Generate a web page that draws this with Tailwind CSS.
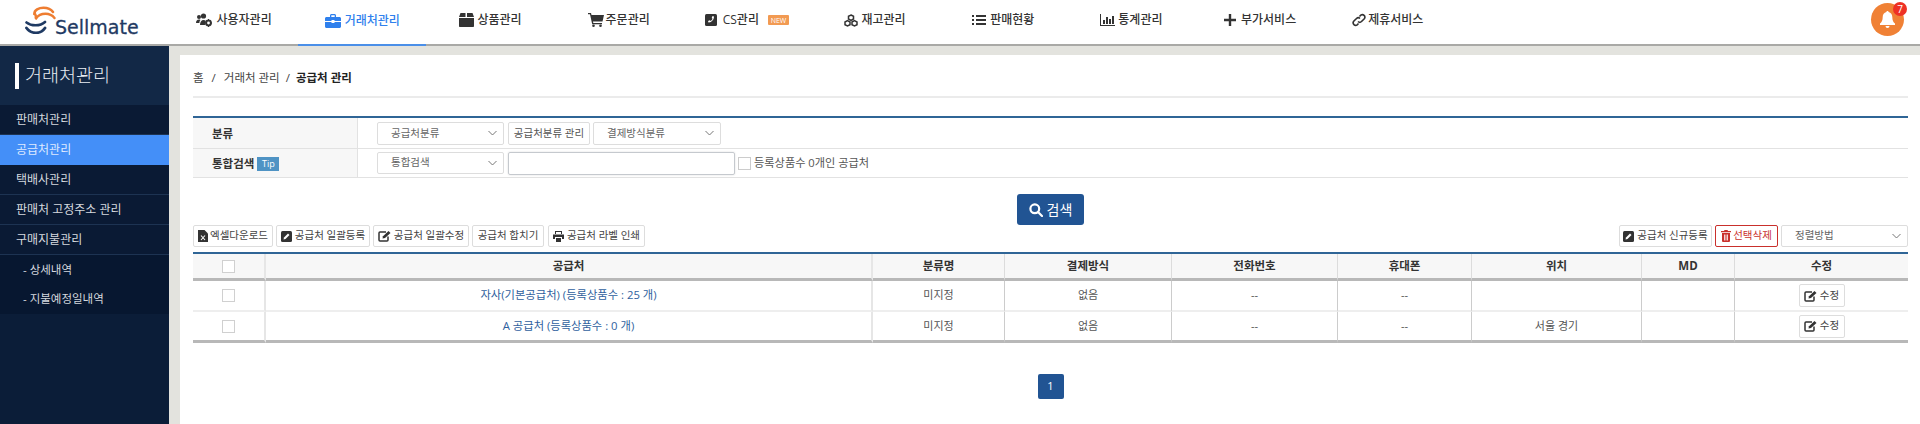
<!DOCTYPE html>
<html lang="ko">
<head>
<meta charset="UTF-8">
<title>Sellmate - 공급처 관리</title>
<script src="https://cdn.jsdelivr.net/npm/@tailwindcss/browser@4"></script>
</head>
<body class="h-[424px] w-[1920px] overflow-hidden bg-[#e3e3de] [font-family:'Open_Sans','Noto_Sans_CJK_KR',sans-serif] text-[#444]">

<!-- top bar -->
<header class="flex h-[46px] items-stretch border-b-2 border-[#a9a9a6] bg-white">
  <div class="flex w-[170px] shrink-0 items-start pl-[25px] pt-[6px]">
    <svg class="shrink-0" width="31" height="28" viewBox="0 0 31 28" fill="none" stroke-linecap="round">
      <path d="M9.500 8C9 4 14 1.800 18.500 1.800C22.500 1.800 26 3.200 28 6" stroke="#ee7d31" stroke-width="2.600"/>
      <path d="M9.500 8C12 8.500 10 12 11 12.500C13 9.500 16.500 7.800 20.500 7.800C24 7.800 27.500 9.500 29.500 12" stroke="#ee7d31" stroke-width="2.400"/>
      <path d="M1.500 16.500C4 18.500 7 19.300 10.500 19.300C14 19.300 17.500 18.300 20 16" stroke="#1f3a63" stroke-width="2.600"/>
      <path d="M1.500 22C4 25.500 7.500 26.800 11 26.800C14.500 26.800 18 25 20 22" stroke="#1f3a63" stroke-width="2.800"/>
    </svg>
    <span class="-ml-[1px] mt-[11px] text-[19px] leading-[20px] text-[#1f3a63] [-webkit-text-stroke:0.3px_#1f3a63] [font-family:'DejaVu_Sans',sans-serif]">Sellmate</span>
  </div>
  <nav class="flex text-[12px] font-medium text-[#333]">
    <a class="flex w-[128.2px] items-center justify-center gap-[4px] pb-[4px]">
      <svg width="16" height="14" viewBox="0 0 16 14" fill="currentColor"><circle cx="3" cy="4" r="2"/><circle cx="7.5" cy="3" r="2.6"/><path d="M0 10c0-2 1-3.500 3-3.500 .6 0 1 .1 1.400 .4-.8 1-1 2-1 3.100zM4 12c0-3 1.400-5 3.500-5 1 0 1.800 .3 2.300 1l-1 3 1 1z"/><circle cx="12.500" cy="10" r="2.400" fill="none" stroke="currentColor" stroke-width="2"/><path d="M12 6h1v1.500h-1zM12 12.500h1V14h-1zM8.500 9.500H10v1H8.500zM15 9.500h1v1h-1z"/></svg>
      사용자관리</a>
    <a class="-mb-[2px] flex w-[128.2px] items-center justify-center gap-[4px] border-b-2 border-[#4a8fe8] pb-[2px] text-[#2f80ed]">
      <svg width="16" height="14" viewBox="0 0 16 14" fill="currentColor"><path d="M5 3V1.500C5 .7 5.700 0 6.500 0h3c.8 0 1.500 .7 1.500 1.500V3h-1.300V1.300H6.300V3z"/><path d="M1.500 3h13c.8 0 1.500 .7 1.500 1.500V7H9.500V6h-3v1H0V4.500C0 3.700 .7 3 1.500 3zM0 8h6.500v1h3V8H16v4.500c0 .8-.7 1.500-1.500 1.500h-13C.7 14 0 13.300 0 12.500z"/></svg>
      거래처관리</a>
    <a class="flex w-[128.2px] items-center justify-center gap-[3px] pb-[4px]">
      <svg width="15" height="14" viewBox="0 0 15 14" fill="currentColor"><path d="M1.500 0h5v4H0zM8 0h5.500L15 4H8zM0 5h15v8c0 .6-.4 1-1 1H1c-.6 0-1-.4-1-1z"/></svg>
      상품관리</a>
    <a class="flex w-[128.2px] items-center justify-center gap-[2px] pb-[4px]">
      <svg width="16" height="14" viewBox="0 0 16 14" fill="currentColor"><path d="M0 0h3l.5 2H16l-1.500 6.500H5l.3 1.500H14v1.300H4.200L2 1.300H0z"/><circle cx="5.500" cy="12.700" r="1.300"/><circle cx="12.500" cy="12.700" r="1.300"/></svg>
      주문관리</a>
    <a class="flex w-[128.2px] items-center justify-center pb-[4px]">
      <svg class="mr-[6px]" width="12" height="12" viewBox="0 0 12 12"><rect width="12" height="12" rx="1.500" fill="currentColor"/><path d="M9 2.500 7.500 2l-.8 2 .9 .8c-.4 1-1 1.700-2 2.200L4.800 6.200 3 7l.5 1.500c3 .3 5.500-3 5.500-6z" fill="#fff"/></svg>
      CS관리
      <span class="ml-[9px] flex h-[10px] w-[21px] items-center justify-center rounded-[1px] bg-[#f29a52] text-[7px] leading-none text-white">NEW</span></a>
    <a class="flex w-[128.2px] items-center justify-center gap-[3px] pb-[4px]">
      <svg width="14" height="13" viewBox="0 0 14 13" fill="none" stroke="currentColor" stroke-width="1.500"><path d="M7 1 9.500 2.300V5L7 6.300 4.500 5V2.300zM3.500 6.700 6 8v2.700L3.500 12 1 10.700V8zM10.500 6.700 13 8v2.700L10.500 12 8 10.700V8z"/></svg>
      재고관리</a>
    <a class="flex w-[128.2px] items-center justify-center gap-[4px] pb-[4px]">
      <svg width="14" height="12" viewBox="0 0 14 12" fill="currentColor"><path d="M0 1h2v2H0zM0 5h2v2H0zM0 9h2v2H0zM4 1h10v2H4zM4 5h10v2H4zM4 9h10v2H4z"/></svg>
      판매현황</a>
    <a class="flex w-[128.2px] items-center justify-center gap-[3px] pb-[4px]">
      <svg width="15" height="12" viewBox="0 0 15 12" fill="currentColor"><path d="M0 0h1v11h14v1H0zM3 6h2v4H3zM6 3h2v7H6zM9 5h2v5H9zM12 2h2v8h-2z"/></svg>
      통계관리</a>
    <a class="flex w-[128.2px] items-center justify-center gap-[4px] pb-[4px]">
      <svg width="14" height="14" viewBox="0 0 14 14" fill="currentColor"><path d="M5.800 1h2.400v4.800H13v2.400H8.200V13H5.800V8.200H1V5.800h4.800z"/></svg>
      부가서비스</a>
    <a class="flex w-[128.2px] items-center justify-center gap-[2px] pb-[4px]">
      <svg width="14" height="14" viewBox="0 0 14 14" fill="none" stroke="currentColor" stroke-width="1.600"><path d="M6 8.500a2.500 2.500 0 0 0 3.500 0l2.800-2.800a2.500 2.500 0 0 0-3.500-3.500L7.500 3.500"/><path d="M8 5.500a2.500 2.500 0 0 0-3.500 0L1.700 8.300a2.500 2.500 0 0 0 3.500 3.500l1.300-1.300"/></svg>
      제휴서비스</a>
  </nav>
  <div class="relative ml-auto mr-[16px] mt-[3px] flex h-[33px] w-[33px] items-center justify-center rounded-full bg-[#f08135]">
    <svg width="15" height="17" viewBox="0 0 15 17" fill="#fff"><path d="M7.500 0c.7 0 1.100 .5 1.100 1.100 2.300 .5 3.700 2.400 3.700 4.900 0 3.500 1 5 2.700 6.600V14H0v-1.400C1.700 11 2.700 9.500 2.700 6c0-2.500 1.400-4.400 3.700-4.900C6.400 .5 6.800 0 7.500 0zM5.500 15h4a2 2 0 0 1-4 0z"/></svg>
    <span class="absolute -right-[3px] top-[-1px] flex h-[14px] w-[14px] items-center justify-center rounded-full bg-[#ee3124] text-[10px] leading-none text-white">7</span>
  </div>
</header>

<div class="flex h-[378px]">
  <!-- side menu -->
  <aside class="flex w-[169px] shrink-0 flex-col bg-[#0b1d38] text-[12px] text-[#d5d9df]">
    <div class="flex h-[59px] shrink-0 items-center bg-[#122846] pl-[15px]">
      <span class="h-[26px] w-[4px] bg-white"></span>
      <span class="ml-[6px] text-[18.500px] font-light leading-none text-[#e8ecf2]">거래처관리</span>
    </div>
    <a class="flex h-[30px] shrink-0 items-center border-b border-[#1d3352] bg-[#0a1a34] pl-[16px]">판매처관리</a>
    <a class="flex h-[30px] shrink-0 items-center bg-[#448ff8] pl-[16px] text-[#dfeaff]">공급처관리</a>
    <a class="flex h-[30px] shrink-0 items-center border-b border-[#1d3352] bg-[#0a1a34] pl-[16px]">택배사관리</a>
    <a class="flex h-[30px] shrink-0 items-center border-b border-[#1d3352] bg-[#0a1a34] pl-[16px]">판매처 고정주소 관리</a>
    <a class="flex h-[30px] shrink-0 items-center border-b border-[#1d3352] bg-[#0a1a34] pl-[16px]">구매지불관리</a>
    <div class="bg-[#071730] text-[11.500px]">
      <a class="flex h-[29px] items-center pl-[23px]">- 상세내역</a>
      <a class="flex h-[30px] items-center pl-[23px]">- 지불예정일내역</a>
    </div>
  </aside>

  <!-- page -->
  <main class="ml-[11px] mt-[9px] flex-1 bg-white pl-[13px] pr-[12px]">
    <div class="flex h-[41px] items-center pt-[4px] text-[11.500px] text-[#444]">
      홈<span class="mx-[8px]">/</span>거래처 관리<span class="mx-[6px]">/</span><b class="font-bold text-[#222]">공급처 관리</b>
    </div>
    <div class="h-[2px] bg-[#ebebeb]"></div>

    <!-- search form -->
    <div class="mt-[18px] border-t-2 border-[#2f6596] text-[10.500px]">
      <div class="flex h-[31px] border-b border-[#e2e2e2]">
        <div class="flex w-[165px] items-center border-r border-[#e2e2e2] bg-[#f7f7f7] pl-[19px] pt-[2px] text-[11.500px] font-bold text-[#333]">분류</div>
        <div class="flex items-center pl-[19px] pt-[1px] text-[#666]">
          <div class="relative flex h-[23px] w-[127px] items-center rounded-[2px] border border-[#ddd] pl-[13px]">공급처분류
            <svg class="absolute right-[6px] top-[7px]" width="9" height="6" viewBox="0 0 9 6" fill="none" stroke="#777"><path d="M.5 1 4.500 5 8.500 1"/></svg>
          </div>
          <div class="ml-[4px] flex h-[23px] w-[82px] items-center justify-center rounded-[2px] border border-[#ddd] text-[#555]">공급처분류 관리</div>
          <div class="relative ml-[3px] flex h-[23px] w-[128px] items-center rounded-[2px] border border-[#ddd] pl-[13px]">결제방식분류
            <svg class="absolute right-[6px] top-[7px]" width="9" height="6" viewBox="0 0 9 6" fill="none" stroke="#777"><path d="M.5 1 4.500 5 8.500 1"/></svg>
          </div>
        </div>
      </div>
      <div class="flex h-[29px] border-b border-[#e2e2e2]">
        <div class="flex w-[165px] items-center border-r border-[#e2e2e2] bg-[#f7f7f7] pl-[19px] pt-[2px] text-[11.500px] font-bold text-[#333]">통합검색
          <span class="ml-[3px] flex h-[14px] w-[22px] items-center justify-center bg-[#4f93c4] text-[9px] font-normal text-white">Tip</span>
        </div>
        <div class="flex items-center pl-[19px] text-[#666]">
          <div class="relative flex h-[22px] w-[127px] items-center rounded-[2px] border border-[#ddd] pl-[13px]">통합검색
            <svg class="absolute right-[6px] top-[7px]" width="9" height="6" viewBox="0 0 9 6" fill="none" stroke="#777"><path d="M.5 1 4.500 5 8.500 1"/></svg>
          </div>
          <div class="ml-[4px] h-[23px] w-[227px] rounded-[2px] border border-[#c5c9ce] shadow-[0_0_2px_rgba(0,0,0,0.15)]"></div>
          <span class="ml-[3px] h-[13px] w-[13px] border border-[#ccc]"></span>
          <span class="ml-[3px] text-[11.200px] text-[#555]">등록상품수 0개인 공급처</span>
        </div>
      </div>
    </div>

    <div class="mt-[16px] flex justify-center">
      <button class="flex h-[31px] w-[67px] items-center justify-center gap-[4px] rounded-[3px] bg-[#215493] text-[14px] text-white">
        <svg width="14" height="14" viewBox="0 0 14 14" fill="none" stroke="#fff" stroke-width="2.200"><circle cx="5.800" cy="5.800" r="4.400"/><path d="M9 9l4 4" stroke-linecap="round"/></svg>
        검색
      </button>
    </div>

    <!-- actions -->
    <div class="flex items-center text-[10.500px] text-[#444]">
      <button class="flex h-[22px] w-[80px] items-center justify-center gap-[2px] rounded-[2px] border border-[#ddd]">
        <svg width="10" height="12" viewBox="0 0 10 12"><path d="M0 0h6.500L10 3.500V12H0z" fill="#333"/><path d="M3 5.500 7 10M7 5.500 3 10" stroke="#fff" stroke-width="1.100"/></svg>
        엑셀다운로드</button>
      <button class="ml-[3px] flex h-[22px] w-[94px] items-center justify-center gap-[3px] rounded-[2px] border border-[#ddd]">
        <svg width="11" height="11" viewBox="0 0 11 11"><rect width="11" height="11" rx="1.500" fill="#333"/><path d="M2.500 8.500 3 6.500 7 2.500 8.500 4 4.500 8z" fill="#fff"/></svg>
        공급처 일괄등록</button>
      <button class="ml-[3px] flex h-[22px] w-[96px] items-center justify-center gap-[3px] rounded-[2px] border border-[#ddd]">
        <svg width="13" height="12" viewBox="0 0 13 12" fill="none"><path d="M8 2H2a1 1 0 0 0-1 1v7a1 1 0 0 0 1 1h7a1 1 0 0 0 1-1V6.500" stroke="#333" stroke-width="1.500"/><path d="M4.500 8.500 5 6.300 10.500 1l2 2L7 8z" fill="#333"/></svg>
        공급처 일괄수정</button>
      <button class="ml-[3px] h-[22px] w-[72px] rounded-[2px] border border-[#ddd]">공급처 합치기</button>
      <button class="ml-[4px] flex h-[22px] w-[97px] items-center justify-center gap-[3px] rounded-[2px] border border-[#ddd]">
        <svg width="11" height="11" viewBox="0 0 11 11" fill="#333"><path d="M2 0h7v3H8V1H3v2H2zM0 3.500h11V8H9V6H2v2H0zM3 7h5v4H3z"/></svg>
        공급처 라벨 인쇄</button>
      <button class="ml-auto flex h-[22px] w-[93px] items-center justify-center gap-[3px] rounded-[2px] border border-[#ddd]">
        <svg width="11" height="11" viewBox="0 0 11 11"><rect width="11" height="11" rx="1.500" fill="#333"/><path d="M2.500 8.500 3 6.500 7 2.500 8.500 4 4.500 8z" fill="#fff"/></svg>
        공급처 신규등록</button>
      <button class="ml-[3px] flex h-[22px] w-[63px] items-center justify-center gap-[2px] rounded-[2px] border border-[#c9302c] text-[#c9302c]">
        <svg width="10" height="12" viewBox="0 0 10 12" fill="#c9302c"><path d="M3.500 0h3L7 1h3v1.300H0V1h3zM1 3h8v8a1 1 0 0 1-1 1H2a1 1 0 0 1-1-1zM3 4.500v6h.8v-6zM4.600 4.500v6h.8v-6zM6.200 4.500v6H7v-6z" fill-rule="evenodd"/></svg>
        선택삭제</button>
      <div class="relative ml-[3px] flex h-[22px] w-[127px] items-center rounded-[2px] border border-[#ddd] pl-[13px] text-[#666]">정렬방법
        <svg class="absolute right-[6px] top-[7px]" width="9" height="6" viewBox="0 0 9 6" fill="none" stroke="#777"><path d="M.5 1 4.500 5 8.500 1"/></svg>
      </div>
    </div>

    <!-- supplier table -->
    <table class="mt-[5px] w-full table-fixed border-separate border-spacing-0 border-t-2 border-[#2f6596] text-center text-[11px] text-[#555]">
      <colgroup>
        <col class="w-[73px]"><col class="w-[607px]"><col class="w-[132px]"><col class="w-[167px]"><col class="w-[166px]"><col class="w-[134px]"><col class="w-[170px]"><col class="w-[93px]"><col>
      </colgroup>
      <thead>
        <tr class="h-[27px] bg-[#f7f7f7] text-[11.500px] text-[#333]">
          <th class="border-b-[3px] border-r-2 border-b-[#b8b8b8] border-r-[#e6e6e6]"><span class="mx-auto block h-[13px] w-[13px] border border-[#d0d0d0] bg-white"></span></th>
          <th class="border-b-[3px] border-r-2 border-b-[#b8b8b8] border-r-[#e6e6e6]">공급처</th>
          <th class="border-b-[3px] border-r border-b-[#b8b8b8] border-r-[#dcdcdc]">분류명</th>
          <th class="border-b-[3px] border-r border-b-[#b8b8b8] border-r-[#dcdcdc]">결제방식</th>
          <th class="border-b-[3px] border-r border-b-[#b8b8b8] border-r-[#dcdcdc]">전화번호</th>
          <th class="border-b-[3px] border-r border-b-[#b8b8b8] border-r-[#dcdcdc]">휴대폰</th>
          <th class="border-b-[3px] border-r border-b-[#b8b8b8] border-r-[#dcdcdc]">위치</th>
          <th class="border-b-[3px] border-r border-b-[#b8b8b8] border-r-[#dcdcdc]">MD</th>
          <th class="border-b-[3px] border-b-[#b8b8b8]">수정</th>
        </tr>
      </thead>
      <tbody>
        <tr class="h-[31px]">
          <td class="border-b-2 border-r-2 border-b-[#eee] border-r-[#e6e6e6]"><span class="mx-auto block h-[13px] w-[13px] border border-[#d0d0d0]"></span></td>
          <td class="border-b-2 border-r-2 border-b-[#eee] border-r-[#e6e6e6] text-[11.300px] text-[#2f5f9e]">자사(기본공급처) (등록상품수 : 25 개)</td>
          <td class="border-b-2 border-r border-b-[#eee] border-r-[#ccc]">미지정</td>
          <td class="border-b-2 border-r border-b-[#eee] border-r-[#ccc]">없음</td>
          <td class="border-b-2 border-r border-b-[#eee] border-r-[#ccc]">--</td>
          <td class="border-b-2 border-r border-b-[#eee] border-r-[#ccc]">--</td>
          <td class="border-b-2 border-r border-b-[#eee] border-r-[#ccc]"></td>
          <td class="border-b-2 border-r border-b-[#eee] border-r-[#ccc]"></td>
          <td class="border-b-2 border-b-[#eee]">
            <button class="mx-auto flex h-[23px] w-[46px] items-center justify-center gap-[3px] rounded-[2px] border border-[#ddd] text-[10.500px] text-[#444]">
              <svg width="13" height="12" viewBox="0 0 13 12" fill="none"><path d="M8 2H2a1 1 0 0 0-1 1v7a1 1 0 0 0 1 1h7a1 1 0 0 0 1-1V6.500" stroke="#333" stroke-width="1.500"/><path d="M4.500 8.500 5 6.300 10.500 1l2 2L7 8z" fill="#333"/></svg>
              수정</button>
          </td>
        </tr>
        <tr class="h-[31px]">
          <td class="border-b-[3px] border-r-2 border-b-[#b8b8b8] border-r-[#e6e6e6]"><span class="mx-auto block h-[13px] w-[13px] border border-[#d0d0d0]"></span></td>
          <td class="border-b-[3px] border-r-2 border-b-[#b8b8b8] border-r-[#e6e6e6] text-[11.300px] text-[#2f5f9e]">A 공급처 (등록상품수 : 0 개)</td>
          <td class="border-b-[3px] border-r border-b-[#b8b8b8] border-r-[#ccc]">미지정</td>
          <td class="border-b-[3px] border-r border-b-[#b8b8b8] border-r-[#ccc]">없음</td>
          <td class="border-b-[3px] border-r border-b-[#b8b8b8] border-r-[#ccc]">--</td>
          <td class="border-b-[3px] border-r border-b-[#b8b8b8] border-r-[#ccc]">--</td>
          <td class="border-b-[3px] border-r border-b-[#b8b8b8] border-r-[#ccc]">서울 경기</td>
          <td class="border-b-[3px] border-r border-b-[#b8b8b8] border-r-[#ccc]"></td>
          <td class="border-b-[3px] border-b-[#b8b8b8]">
            <button class="mx-auto flex h-[23px] w-[46px] items-center justify-center gap-[3px] rounded-[2px] border border-[#ddd] text-[10.500px] text-[#444]">
              <svg width="13" height="12" viewBox="0 0 13 12" fill="none"><path d="M8 2H2a1 1 0 0 0-1 1v7a1 1 0 0 0 1 1h7a1 1 0 0 0 1-1V6.500" stroke="#333" stroke-width="1.500"/><path d="M4.500 8.500 5 6.300 10.500 1l2 2L7 8z" fill="#333"/></svg>
              수정</button>
          </td>
        </tr>
      </tbody>
    </table>

    <div class="mt-[31px] flex justify-center">
      <a class="flex h-[25px] w-[26px] items-center justify-center rounded-[2px] bg-[#215493] text-[11px] text-white">1</a>
    </div>
  </main>
</div>
</body>
</html>
